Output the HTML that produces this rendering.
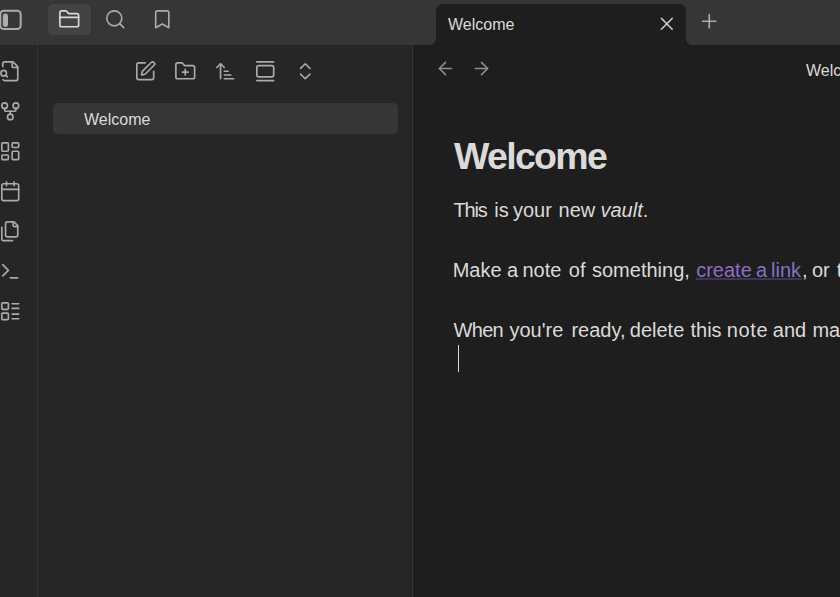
<!DOCTYPE html>
<html><head><meta charset="utf-8">
<style>
html,body{margin:0;padding:0}
body{width:840px;height:597px;overflow:hidden;position:relative;background:#1e1e1e;font-family:"Liberation Sans",sans-serif;color:#dadada}
.a{position:absolute}
svg.i{position:absolute;width:22.5px;height:22.5px;fill:none;stroke:#ababab;stroke-width:1.75;stroke-linecap:round;stroke-linejoin:round;overflow:visible}
.t{position:absolute;white-space:pre;line-height:1}
</style></head><body>
<!-- top bar -->
<div class="a" style="left:0;top:0;width:840px;height:45px;background:#363636"></div>
<!-- ribbon -->
<div class="a" style="left:0;top:45px;width:37px;height:552px;background:#262626"></div>
<div class="a" style="left:37px;top:45px;width:1px;height:552px;background:#363636"></div>
<!-- sidebar -->
<div class="a" style="left:38px;top:45px;width:374px;height:552px;background:#262626"></div>
<div class="a" style="left:412px;top:45px;width:1px;height:552px;background:#363636"></div>

<!-- tab -->
<div class="a" style="left:436px;top:4px;width:250px;height:41px;background:#1e1e1e;border-radius:7px 7px 0 0"></div>
<!-- feet -->
<svg class="a" style="left:430px;top:39px" width="6" height="6" viewBox="0 0 6 6"><path d="M6 0V6H0A6 6 0 0 0 6 0Z" fill="#1e1e1e"/></svg>
<svg class="a" style="left:686px;top:39px" width="6" height="6" viewBox="0 0 6 6"><path d="M0 0V6H6A6 6 0 0 1 0 0Z" fill="#1e1e1e"/></svg>


<!-- top bar icons -->
<svg class="a" style="left:0;top:9px" width="23" height="22" viewBox="0 0 23 22"><rect x="0.3" y="1.8" width="20.4" height="18.3" rx="3.5" fill="none" stroke="#ababab" stroke-width="2"/><rect x="2.8" y="4.5" width="5.2" height="13.6" rx="2.4" fill="#ababab"/></svg>
<div class="a" style="left:48px;top:4px;width:43px;height:31px;border-radius:5px;background:#434343"></div>
<svg class="i" style="left:58px;top:8px;stroke:#dadada" viewBox="0 0 24 24"><path d="M20 20a2 2 0 0 0 2-2V8a2 2 0 0 0-2-2h-7.9a2 2 0 0 1-1.69-.9L9.6 3.9A2 2 0 0 0 7.93 3H4a2 2 0 0 0-2 2v13a2 2 0 0 0 2 2Z"/><path d="M2 10h20"/></svg>
<svg class="i" style="left:104px;top:8px" viewBox="0 0 24 24"><circle cx="11" cy="11" r="8"/><path d="m21 21-4.3-4.3"/></svg>
<svg class="i" style="left:151px;top:8px" viewBox="0 0 24 24"><path d="m19 21-7-4-7 4V5a2 2 0 0 1 2-2h10a2 2 0 0 1 2 2v16z"/></svg>

<!-- ribbon icons -->
<svg class="i" style="left:-1px;top:60px" viewBox="0 0 24 24"><path d="M14 2v4a2 2 0 0 0 2 2h4"/><path d="M4.268 21a2 2 0 0 0 1.727 1H18a2 2 0 0 0 2-2V7l-5-5H6a2 2 0 0 0-2 2v3"/><path d="m9 18-1.5-1.5"/><circle cx="5" cy="14" r="3"/></svg>
<svg class="i" style="left:-1px;top:100px" viewBox="0 0 24 24"><circle cx="12" cy="18" r="3"/><circle cx="6" cy="6" r="3"/><circle cx="18" cy="6" r="3"/><path d="M18 9v2c0 .6-.4 1-1 1H7c-.6 0-1-.4-1-1V9"/><path d="M12 12v3"/></svg>
<svg class="i" style="left:-1px;top:140px" viewBox="0 0 24 24"><rect width="7" height="9" x="3" y="3" rx="1"/><rect width="7" height="5" x="14" y="3" rx="1"/><rect width="7" height="9" x="14" y="12" rx="1"/><rect width="7" height="5" x="3" y="16" rx="1"/></svg>
<svg class="i" style="left:-1px;top:180px" viewBox="0 0 24 24"><path d="M8 2v4"/><path d="M16 2v4"/><rect width="18" height="18" x="3" y="4" rx="2"/><path d="M3 10h18"/></svg>
<svg class="i" style="left:-1px;top:220px" viewBox="0 0 24 24"><path d="M20 7h-3a2 2 0 0 1-2-2V2"/><path d="M9 18a2 2 0 0 1-2-2V4a2 2 0 0 1 2-2h7l4 4v10a2 2 0 0 1-2 2Z"/><path d="M3 7.6v12.8A1.6 1.6 0 0 0 4.6 22h9.8"/></svg>
<svg class="i" style="left:-1px;top:260px" viewBox="0 0 24 24"><polyline points="4 17 10 11 4 5"/><line x1="12" x2="20" y1="19" y2="19"/></svg>
<svg class="i" style="left:-1px;top:300px" viewBox="0 0 24 24"><rect width="7" height="7" x="3" y="3" rx="1"/><rect width="7" height="7" x="3" y="14" rx="1"/><path d="M14 4h7"/><path d="M14 9h7"/><path d="M14 15h7"/><path d="M14 20h7"/></svg>

<!-- sidebar toolbar -->
<svg class="i" style="left:134px;top:60px" viewBox="0 0 24 24"><path d="M12 3H5a2 2 0 0 0-2 2v14a2 2 0 0 0 2 2h14a2 2 0 0 0 2-2v-7"/><path d="M18.375 2.625a1 1 0 0 1 3 3l-9.013 9.014a2 2 0 0 1-.853.505l-2.873.84a.5.5 0 0 1-.62-.62l.84-2.873a2 2 0 0 1 .506-.852z"/></svg>
<svg class="i" style="left:174px;top:60px" viewBox="0 0 24 24"><path d="M12 10v6"/><path d="M9 13h6"/><path d="M20 20a2 2 0 0 0 2-2V8a2 2 0 0 0-2-2h-7.9a2 2 0 0 1-1.69-.9L9.6 3.9A2 2 0 0 0 7.93 3H4a2 2 0 0 0-2 2v13a2 2 0 0 0 2 2Z"/></svg>
<svg class="i" style="left:214px;top:60px" viewBox="0 0 24 24"><path d="m3 8 4-4 4 4"/><path d="M7 4v16"/><path d="M11 12h4"/><path d="M11 16h7"/><path d="M11 20h10"/></svg>
<svg class="i" style="left:254px;top:60px" viewBox="0 0 24 24"><path d="M3 2h18"/><rect width="18" height="12" x="3" y="6" rx="2"/><path d="M3 22h18"/></svg>
<svg class="i" style="left:294px;top:60px" viewBox="0 0 24 24"><path d="m7 15 5 5 5-5"/><path d="m7 9 5-5 5 5"/></svg>

<!-- nav item -->
<div class="a" style="left:53px;top:103px;width:345px;height:31px;border-radius:5px;background:#363636"></div>
<div class="t" style="left:84px;top:112px;font-size:16px;color:#dadada">Welcome</div>

<!-- tab content -->
<div class="t" style="left:448px;top:17px;font-size:16px;color:#dadada">Welcome</div>
<svg class="i" style="left:655.55px;top:12.65px;width:21.6px;height:21.6px;stroke:#c8c8c8" viewBox="0 0 24 24"><path d="M18 6 6 18"/><path d="m6 6 12 12"/></svg>
<svg class="i" style="left:698px;top:10px;stroke:#ababab" viewBox="0 0 24 24"><path d="M5 12h14"/><path d="M12 5v14"/></svg>

<!-- view header -->
<svg class="i" style="left:435.3px;top:57.5px;width:21px;height:21px;stroke:#8f8f8f" viewBox="0 0 24 24"><path d="m12 19-7-7 7-7"/><path d="M19 12H5"/></svg>
<svg class="i" style="left:470.5px;top:57.5px;width:21px;height:21px;stroke:#8f8f8f" viewBox="0 0 24 24"><path d="M5 12h14"/><path d="m12 5 7 7-7 7"/></svg>
<div class="t" style="left:806px;top:62.5px;font-size:16px;color:#dadada">Welcome</div>

<!-- content -->
<div class="t" style="left:454px;top:138px;font-size:37.5px;letter-spacing:-1.7px;font-weight:700;color:#dadada">Welcome</div>
<!--L1-->
<div class="t" style="left:453.4px;top:200px;font-size:20px;letter-spacing:-1.1px">This</div>
<div class="t" style="left:494.2px;top:200px;font-size:20px;">is</div>
<div class="t" style="left:512.9px;top:200px;font-size:20px;">your</div>
<div class="t" style="left:558.6px;top:200px;font-size:20px;">new</div>
<div class="t" style="left:600.5px;top:200px;font-size:20px;"><i>vault</i>.</div>
<!--L2-->
<div class="t" style="left:452.7px;top:260px;font-size:20px;">Make</div>
<div class="t" style="left:507px;top:260px;font-size:20px;">a</div>
<div class="t" style="left:522.4px;top:260px;font-size:20px;">note</div>
<div class="t" style="left:568.8px;top:260px;font-size:20px;">of</div>
<div class="t" style="left:592px;top:260px;font-size:20px;">something,</div>
<div class="t" style="left:696.2px;top:260px;font-size:20px;color:#8a6fc4;">create</div>
<div class="t" style="left:756.1px;top:260px;font-size:20px;color:#8a6fc4;">a</div>
<div class="t" style="left:771px;top:260px;font-size:20px;color:#8a6fc4;">link</div>
<div class="t" style="left:801.9px;top:260px;font-size:20px;">,</div>
<div class="t" style="left:812px;top:260px;font-size:20px;">or</div>
<div class="t" style="left:836.7px;top:260px;font-size:20px;">try</div>
<div class="a" style="left:696px;top:278px;width:106px;height:2px;background:#3f3360"></div>
<!--L3-->
<div class="t" style="left:453.6px;top:320px;font-size:20px;letter-spacing:-0.7px">When</div>
<div class="t" style="left:509.5px;top:320px;font-size:20px;">you're</div>
<div class="t" style="left:571.4px;top:320px;font-size:20px;">ready,</div>
<div class="t" style="left:629.8px;top:320px;font-size:20px;">delete</div>
<div class="t" style="left:690.5px;top:320px;font-size:20px;">this</div>
<div class="t" style="left:726.7px;top:320px;font-size:20px;letter-spacing:0.7px">note</div>
<div class="t" style="left:772.8px;top:320px;font-size:20px;">and</div>
<div class="t" style="left:812.4px;top:320px;font-size:20px;">make</div>
<div class="a" style="left:458px;top:345px;width:1px;height:27px;background:#dadada"></div>
</body></html>
